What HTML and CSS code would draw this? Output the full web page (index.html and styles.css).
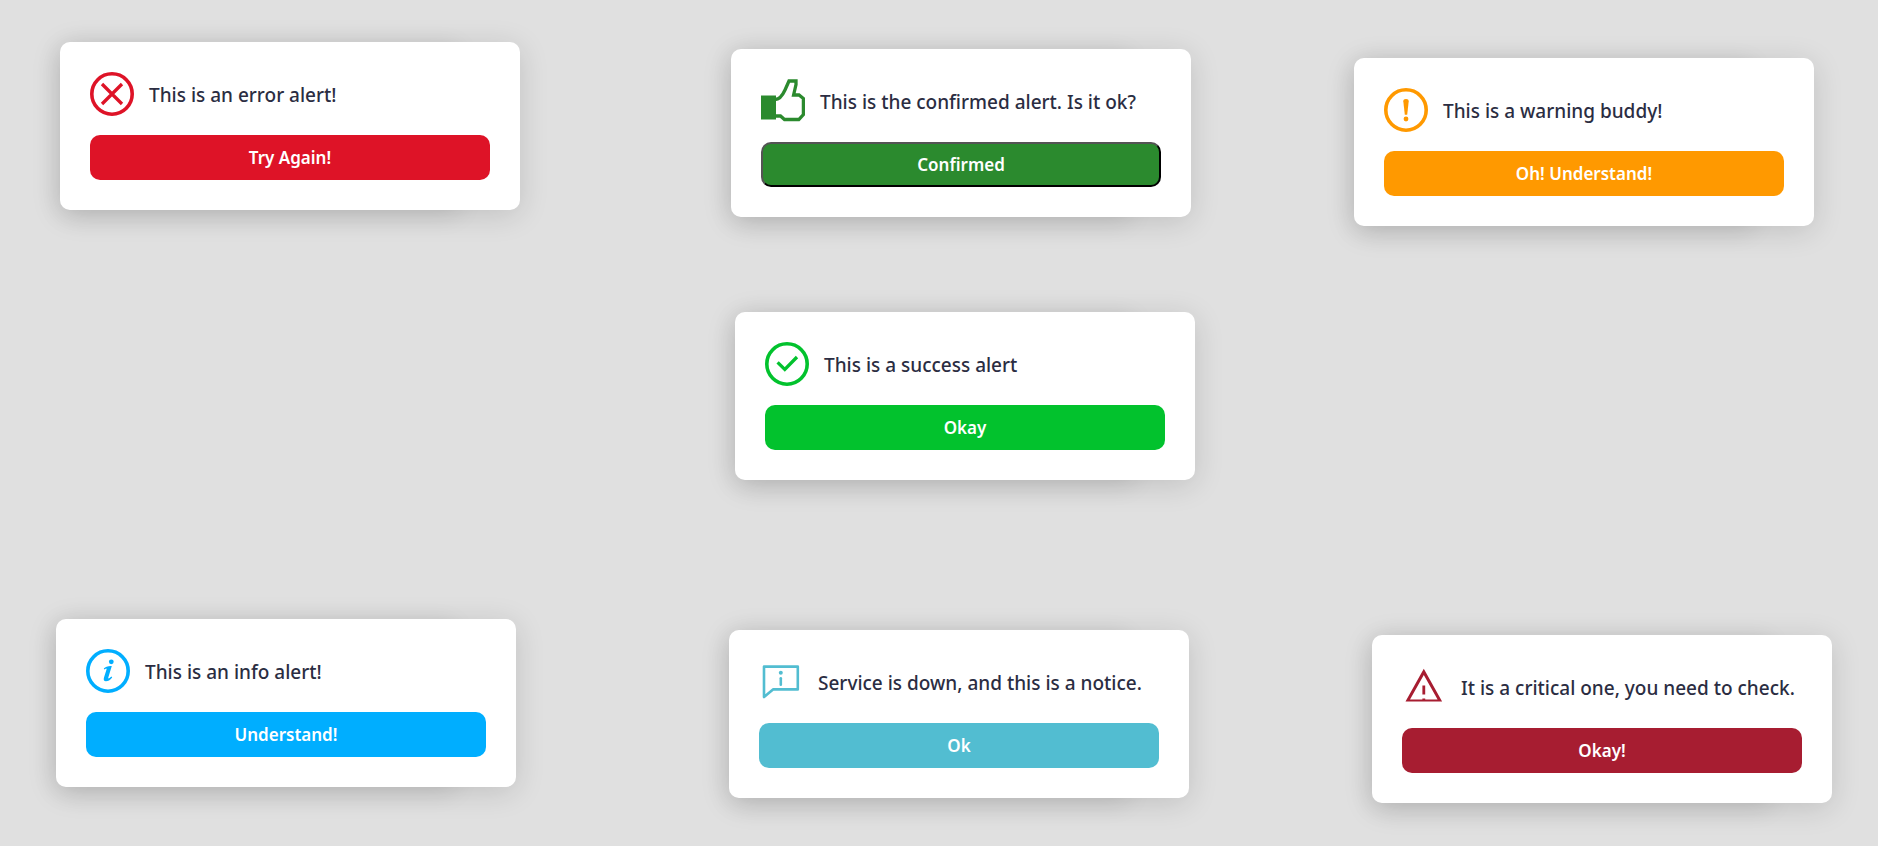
FILE: index.html
```html
<!DOCTYPE html>
<html lang="en">
<head>
<meta charset="utf-8">
<meta name="viewport" content="width=device-width, initial-scale=1">
<title>Alerts</title>
<link rel="stylesheet" href="styles.css">
</head>
<body>
<main class="board">
  <section class="alert alert--error">
    <div class="alert__head">
      <svg class="alert__icon" viewBox="0 0 44 44" aria-hidden="true"><circle class="line line--ring" cx="22" cy="22" r="20.2"/><path class="line" d="M12 12 32 32M32 12 12 32"/></svg>
      <p class="alert__text">This is an error alert!</p>
    </div>
    <button class="alert__button" type="button">Try Again!</button>
  </section>

  <section class="alert alert--confirmed">
    <div class="alert__head">
      <svg class="alert__icon" viewBox="0 0 44 44" aria-hidden="true"><path class="solid" d="M0 16.5H15V40.5H0Z"/><path class="line" d="M14 20.5C18.5 20.5 21.5 16.5 24 11L28 2H35V5.5L32.6 16H38L42.4 19.5V35.5L37.8 40.5H23.5L19.5 37H14"/></svg>
      <p class="alert__text">This is the confirmed alert. Is it ok?</p>
    </div>
    <button class="alert__button" type="button">Confirmed</button>
  </section>

  <section class="alert alert--warning">
    <div class="alert__head">
      <svg class="alert__icon" viewBox="0 0 44 44" aria-hidden="true"><circle class="line line--ring" cx="22" cy="22" r="20.2"/><path class="solid" d="M19.3 13.3Q19.3 11 22 11T24.7 13.3L23.2 26.8H20.8Z"/><circle class="solid" cx="22" cy="31" r="2.4"/></svg>
      <p class="alert__text">This is a warning buddy!</p>
    </div>
    <button class="alert__button" type="button">Oh! Understand!</button>
  </section>

  <section class="alert alert--success">
    <div class="alert__head">
      <svg class="alert__icon" viewBox="0 0 44 44" aria-hidden="true"><circle class="line line--ring" cx="22" cy="22" r="20.2"/><path class="line" d="M12.6 20.4 19.8 27.4 32 15"/></svg>
      <p class="alert__text">This is a success alert</p>
    </div>
    <button class="alert__button" type="button">Okay</button>
  </section>

  <section class="alert alert--info">
    <div class="alert__head">
      <svg class="alert__icon" viewBox="0 0 44 44" aria-hidden="true"><circle class="line line--ring" cx="22" cy="22" r="20.2"/><circle class="solid" cx="25.3" cy="12.8" r="2.4"/><path class="solid" d="M17.8 19.6C19.6 17.6 22 16.8 25.8 17L22.3 28.6C22 30 22.9 29.8 25.5 27.6L26.2 28.4C24 31.2 22 32.2 20 32.2C17.8 32.2 17.3 30.6 18 28.4L20.6 20.2C20.8 19.2 20 19.3 18.4 20.6Z"/></svg>
      <p class="alert__text">This is an info alert!</p>
    </div>
    <button class="alert__button" type="button">Understand!</button>
  </section>

  <section class="alert alert--notice">
    <div class="alert__head">
      <svg class="alert__icon" viewBox="0 0 44 44" aria-hidden="true"><path class="line line--thin" d="M5 6.6H38.8V29.4H14L5 37Z"/><circle class="solid" cx="21.8" cy="12.7" r="2"/><path class="line line--thin" d="M21.8 18.2V24.8"/></svg>
      <p class="alert__text">Service is down, and this is a notice.</p>
    </div>
    <button class="alert__button" type="button">Ok</button>
  </section>

  <section class="alert alert--critical">
    <div class="alert__head">
      <svg class="alert__icon" viewBox="0 0 44 44" aria-hidden="true"><path class="solid" fill-rule="evenodd" d="M21.8 3.8 40.1 36.5H3.5ZM21.8 10 8 34.5H35.6Z"/><path class="solid" d="M20.4 20.5H23.2V29.5H20.4ZM20.4 33.4H23.2V36H20.4Z"/></svg>
      <p class="alert__text">It is a critical one, you need to check.</p>
    </div>
    <button class="alert__button" type="button">Okay!</button>
  </section>
</main>
</body>
</html>
```
FILE: styles.css
```css
* {
  box-sizing: border-box;
}

body {
  margin: 0;
  background: #e0e0e0;
  font-family: "Noto Sans", "Open Sans", sans-serif;
}

.board {
  display: grid;
  grid-template-columns: repeat(3, 1fr);
  grid-template-rows: repeat(3, 1fr);
  min-height: 100vh;
  align-items: start;
  isolation: isolate;
}

.alert {
  position: relative;
  width: 460px;
  padding: 30px;
  border-radius: 10px;
  background: #fff;
  box-shadow: 0 5px 30px rgba(0, 0, 0, 0.14);
}

/* second, narrower shadow under the card */
.alert::before {
  content: "";
  position: absolute;
  inset: 0 60px 0 0;
  z-index: -1;
  border-radius: 10px;
  box-shadow: 0 5px 25px rgba(0, 0, 0, 0.1);
}

.alert__head {
  display: flex;
  align-items: center;
  gap: 15px;
  margin-bottom: 19px;
}

.alert__icon {
  flex: none;
  width: 44px;
  height: 44px;
}

.alert__text {
  margin: 0;
  padding-top: 2px;
  color: #2b2d42;
  font-size: 19px;
  font-weight: 500;
  line-height: 24px;
  white-space: nowrap;
}

.alert__button {
  display: block;
  width: 100%;
  height: 45px;
  padding: 0;
  border: 0;
  border-radius: 10px;
  background: var(--tone);
  color: #fff;
  font: 600 17px/24px "Noto Sans", "Open Sans", sans-serif;
  cursor: pointer;
}

.solid {
  fill: var(--tone);
}

.line {
  fill: none;
  stroke: var(--tone);
  stroke-width: 3.3;
}

.line--ring {
  stroke-width: 3.6;
}

.line--thin {
  stroke-width: 2.6;
  stroke-linecap: round;
  stroke-linejoin: round;
}

.alert--error {
  --tone: #de1327;
  margin: 42px 0 0 60px;
}

.alert--confirmed {
  --tone: #2b8a2e;
  margin: 49px 0 0 105px;
}

.alert--confirmed .alert__button {
  border: 2px outset #000;
}

.alert--warning {
  --tone: #ff9900;
  margin: 58px 0 0 102px;
}

.alert--success {
  --tone: #02c22d;
  grid-column: 2;
  margin: 30px 0 0 109px;
}

.alert--info {
  --tone: #00aeff;
  grid-column: 1;
  margin: 55px 0 0 56px;
}

.alert--notice {
  --tone: #52bdd1;
  margin: 66px 0 0 103px;
}

.alert--critical {
  --tone: #a71d31;
  margin: 71px 0 0 120px;
}
```
